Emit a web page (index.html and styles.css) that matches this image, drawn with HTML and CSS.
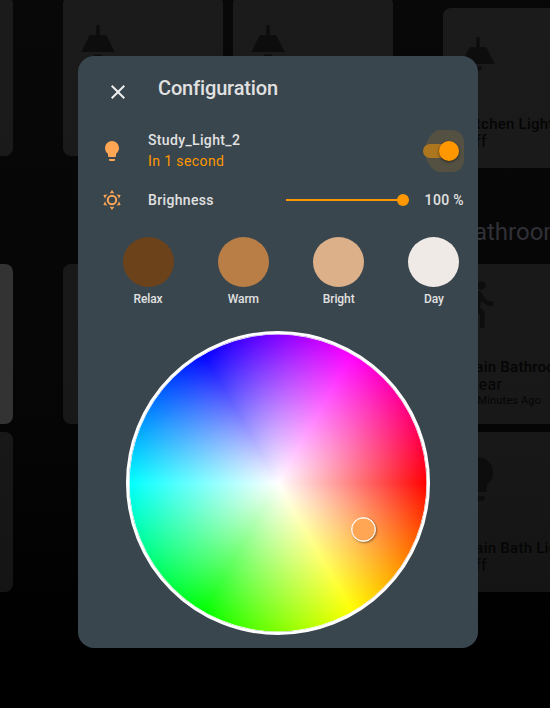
FILE: index.html
```html
<!DOCTYPE html>
<html lang="en">
<head>
<meta charset="utf-8">
<title>Configuration</title>
<link rel="stylesheet" href="styles.css">
</head>
<body>
<svg class="defs" width="0" height="0">
  <symbol id="lamp" viewBox="0 0 24 24"><path d="M11 2h2v6h4l5 10H2L7 8h4zM9.500 19.500h5a2.500 2.500 0 0 1-5 0z"/></symbol>
  <symbol id="bulb" viewBox="0 0 24 24"><path d="M12 2a7 7 0 0 0-7 7c0 2.380 1.190 4.470 3 5.740V17a1 1 0 0 0 1 1h6a1 1 0 0 0 1-1v-2.260c1.810-1.270 3-3.360 3-5.740a7 7 0 0 0-7-7zM9 21a1 1 0 0 0 1 1h4a1 1 0 0 0 1-1v-1H9z"/></symbol>
  <symbol id="walk" viewBox="0 0 24 24"><path d="M13.500 5.500c1.100 0 2-.9 2-2s-.9-2-2-2-2 .9-2 2 .9 2 2 2zM9.800 8.900L7 23h2.100l1.800-8 2.100 2v6h2v-7.500l-2.100-2 .6-3C14.800 12 16.800 13 19 13v-2c-1.900 0-3.500-1-4.300-2.400l-1-1.600c-.4-.6-1-1-1.700-1-.3 0-.5.1-.8.1L6 8.300V13h2V9.600l1.800-.7"/></symbol>
</svg>
<div class="board">
  <div class="column side">
    <div class="card"></div>
    <div class="card bright gap"></div>
    <div class="card"></div>
  </div>
  <div class="column middle">
    <div class="card"><svg class="icon"><use href="#lamp"/></svg></div>
    <div class="card"><svg class="icon"><use href="#lamp"/></svg></div>
    <div class="card gap"></div>
    <div class="card gap"></div>
  </div>
  <div class="column right">
    <div class="card"><svg class="icon"><use href="#lamp"/></svg><b>Kitchen Light</b><span>Off</span></div>
    <h2>Bathroom</h2>
    <div class="card"><svg class="icon walk"><use href="#walk"/></svg><b>Main Bathroom</b><span>Clear</span><small>10 Minutes Ago</small></div>
    <div class="card"><svg class="icon bulb"><use href="#bulb"/></svg><b>Main Bath Light</b><span>Off</span></div>
  </div>
</div>
<section class="dialog">
  <header>
    <svg class="close" viewBox="0 0 24 24"><path d="M19 6.410L17.590 5 12 10.590 6.410 5 5 6.410 10.590 12 5 17.590 6.410 19 12 13.410 17.590 19 19 17.590 13.410 12z"/></svg>
    <h1>Configuration</h1>
  </header>
  <div class="row entity">
    <svg class="glyph"><use href="#bulb"/></svg>
    <div class="info"><div>Study_Light_2</div><div class="accent">In 1 second</div></div>
    <div class="toggle"><i class="ripple"></i><i class="track"></i><i class="thumb"></i></div>
  </div>
  <div class="row brightness">
    <svg class="glyph sun" viewBox="0 0 24 24"><circle cx="12" cy="12" r="4.200"/><path d="M12 2l2.400 3.400a7 7 0 0 0-4.800 0zM12 22l2.400-3.400a7 7 0 0 1-4.800 0zM3.350 7l4.150-.4a7 7 0 0 0-2.400 4.150zM3.350 17l4.150.4a7 7 0 0 1-2.400-4.150zM20.650 7l-4.150-.4a7 7 0 0 1 2.400 4.150zM20.650 17l-4.150.4a7 7 0 0 0 2.400-4.150z"/></svg>
    <div class="info">Brighness</div>
    <div class="slider"><i></i></div>
    <div class="value">100 %</div>
  </div>
  <div class="presets">
    <div class="preset"><i class="relax"></i>Relax</div>
    <div class="preset"><i class="warm"></i>Warm</div>
    <div class="preset"><i class="light"></i>Bright</div>
    <div class="preset"><i class="day"></i>Day</div>
  </div>
  <div class="wheel"><i class="picker"></i></div>
</section>
</body>
</html>
```
FILE: styles.css
```css
* { box-sizing: border-box; }
body { margin: 0; width: 550px; height: 708px; overflow: hidden; position: relative; background: linear-gradient(#080808, #050505 60%, #000 95%); font-family: Roboto, sans-serif; color: #e1e1e1; }
.defs { position: absolute; }
.board { display: grid; grid-template-columns: 13px 330px 107px; column-gap: 50px; width: 550px; overflow: hidden; }
.column { display: grid; align-content: start; justify-content: end; gap: 8px 10px; color: #050505; }
.side, .middle { margin-top: -4px; }
.middle { grid-template-columns: 160px 160px; }
.gap { margin-top: 100px; }
.right { margin: 8px 0 0; justify-content: start; }
.card { width: 160px; height: 160px; border-radius: 8px; background: rgba(255,255,255,.08); padding: 16px; display: flex; flex-direction: column; font-size: 16px; line-height: 18px; white-space: nowrap; }
.card.bright { background: #333; }
.card b, .card span, .card small { margin-left: 3px; letter-spacing: .25px; }
.card b { font-weight: 500; font-size: 15px; }
.card span { margin-left: 5px; }
.card small { font-size: 11px; line-height: 14px; margin-left: 3px; letter-spacing: .15px; }
.icon { width: 40px; height: 40px; margin: 10px 0 41px -1px; fill: #0d0d0d; flex: none; }
.icon.walk { width: 52px; height: 52px; margin: -2px 0 28px -7px; }
.icon.bulb { width: 52px; height: 52px; margin: 5px 0 34px -7px; }
h2 { margin: 42px 0 10px 16px; font-size: 24px; line-height: 28px; height: 28px; font-weight: 400; color: #303036; }
.dialog { position: absolute; left: 78px; top: 56px; width: 400px; height: 592px; border-radius: 16px; background: #39464e; padding: 0 14px 0 22px; font-size: 14px; font-weight: 500; }
header { display: flex; height: 70px; }
.close { width: 24px; height: 24px; margin: 24px 28px 0 6px; fill: #eee; }
h1 { margin: 20px 0 0; font-size: 20px; line-height: 24px; font-weight: 500; letter-spacing: -.15px; }
.row { display: flex; align-items: center; letter-spacing: .35px; }
.entity { height: 50px; }
.glyph { width: 24px; height: 24px; fill: #ffa655; margin-right: 24px; flex: none; }
.info { flex: 1; line-height: 21px; }
.accent { color: #ff9800; font-weight: 400; letter-spacing: .4px; }
.toggle { position: relative; width: 41px; height: 42px; overflow: hidden; border-radius: 0 12px 12px 0; }
.toggle i { position: absolute; }
.ripple { left: 2px; top: -3px; width: 48px; height: 48px; border-radius: 50%; background: rgba(255,152,0,.14); }
.track { left: 0; top: 14px; width: 36px; height: 14px; border-radius: 7px; background: #ad7720; }
.thumb { left: 16px; top: 11px; width: 20px; height: 20px; border-radius: 50%; background: #ff9800; box-shadow: 0 1px 3px #0008; }
.brightness { height: 48px; }
.sun circle { fill: none; stroke: #ffa655; stroke-width: 2; }
.slider { width: 123px; height: 12px; display: flex; align-items: center; justify-content: flex-end; background: linear-gradient(#ff9800, #ff9800) 0 5px / 117px 2px no-repeat; }
.slider i { width: 12px; height: 12px; border-radius: 50%; background: #ff9800; }
.value { width: 55px; text-align: right; }
.presets { display: flex; justify-content: space-between; margin: 13px 4px 0 22px; }
.preset { width: 52px; display: flex; flex-direction: column; align-items: center; font-size: 12px; line-height: 14px; letter-spacing: -.1px; }
.preset i { width: 51px; height: 50px; border-radius: 50%; margin-bottom: 5px; }
.relax { background: #6c421a; }
.warm { background: #b97e46; }
.light { background: #dcb18a; }
.day { background: #f0eae6; }
.wheel { position: relative; width: 304px; height: 304px; margin: 25px 0 0 26px; border-radius: 50%; border: 3px solid #fff; box-shadow: inset 0 0 0 .6px #fff; background: radial-gradient(closest-side, #fff, #fff0) padding-box, conic-gradient(from 90deg, red, #ff0, lime, #0ff, blue, #f0f, red) padding-box; }
.picker { position: absolute; left: 222px; top: 183px; width: 25px; height: 25px; border: 1px solid #fff; border-radius: 50%; background: #ffa655; box-shadow: inset 0 0 0 .4px #fff, 1px 1px 2px #0006; }
```
